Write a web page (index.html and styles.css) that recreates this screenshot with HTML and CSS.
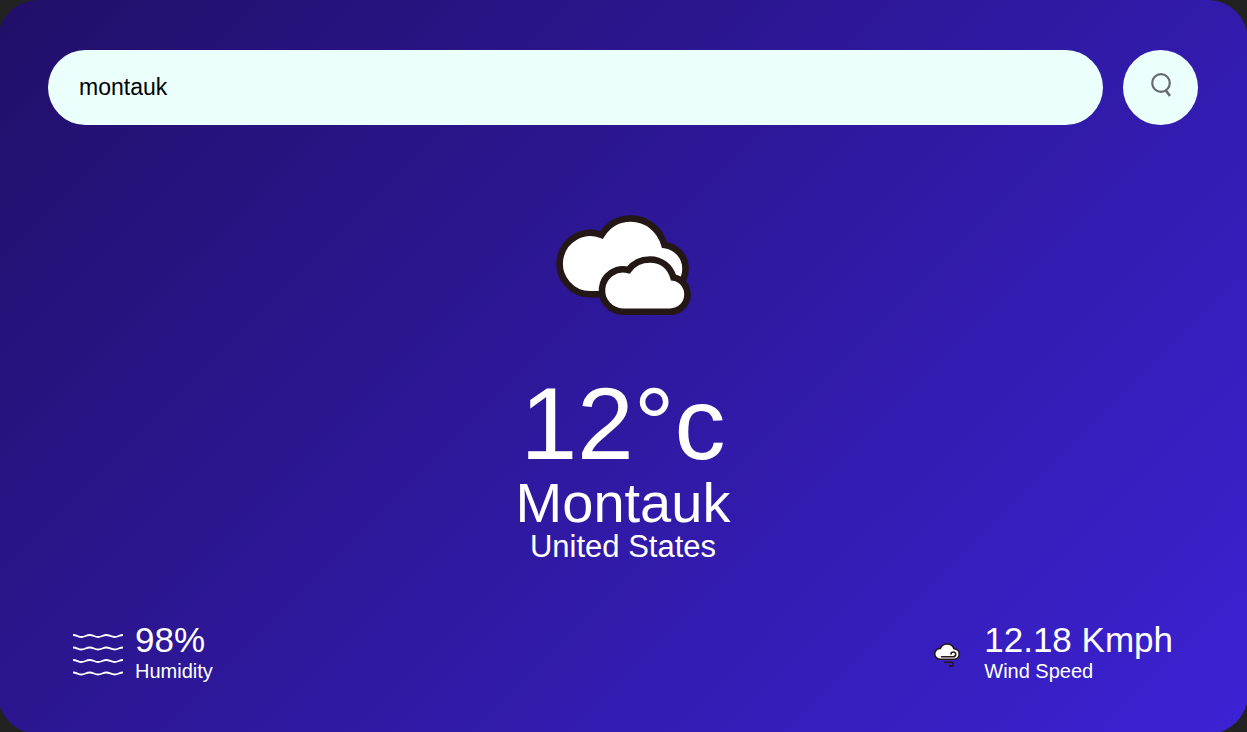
FILE: index.html
```html
<!DOCTYPE html>
<html lang="en">
<head>
<meta charset="utf-8">
<meta name="viewport" content="width=device-width, initial-scale=1">
<title>Weather</title>
<link rel="stylesheet" href="styles.css">
</head>
<body>
<main class="card">
  <form class="search">
    <input class="search-input" type="text" value="montauk" aria-label="City name" spellcheck="false" autocomplete="off">
    <button class="search-button" type="button" aria-label="Search">
      <svg class="search-icon" viewBox="0 0 24 28" fill="none" stroke="#686b6a" stroke-width="2.2">
        <circle cx="12" cy="12" r="8.8"/>
        <path d="M16.400 19L21 25" stroke-width="2.6"/>
      </svg>
    </button>
  </form>

  <section class="weather">
    <svg class="weather-icon" viewBox="0 0 136 102" fill="#fff" stroke="#231815" stroke-width="6.6" aria-hidden="true">
      <path d="M36 79.300A30.700 30.700 0 1 1 46.500 20C53.500 9 63.500 3.500 75.700 3.500C92 3.500 105 14.500 109.500 30C121.500 31.500 130.500 41.500 130.500 53.500C130.500 58.500 129.500 62.500 127 66.500L100 79.300Z"/>
      <path d="M68.700 96.700A21.200 21.200 0 1 1 73.500 55C78.500 48 86 44.500 95 44.500C106.500 44.500 115 51.500 118.500 62.500C126.500 63.500 132.500 71 132.500 79.500C132.500 89 125 96.700 115 96.700Z"/>
    </svg>
    <h1 class="temp">12°c</h1>
    <h2 class="city">Montauk</h2>
    <h3 class="country">United States</h3>
  </section>

  <section class="details">
    <div class="detail">
      <svg class="detail-icon" viewBox="0 0 50 50" fill="none" stroke="#fff" stroke-width="1.8" aria-hidden="true">
        <path d="M0 4C4 4 5 6 8.500 6S13 4 16.700 4S21.500 6 25 6S30 4 33.300 4S38 6 41.700 6S46 4 50 4"/>
        <path d="M0 16.500C4 16.500 5 18.500 8.500 18.500S13 16.500 16.700 16.500S21.500 18.500 25 18.500S30 16.500 33.300 16.500S38 18.500 41.700 18.500S46 16.500 50 16.500"/>
        <path d="M0 29C4 29 5 31 8.500 31S13 29 16.700 29S21.500 31 25 31S30 29 33.300 29S38 31 41.700 31S46 29 50 29"/>
        <path d="M0 41.500C4 41.500 5 43.500 8.500 43.500S13 41.500 16.700 41.500S21.500 43.500 25 43.500S30 41.500 33.300 41.500S38 43.500 41.700 43.500S46 41.500 50 41.500"/>
      </svg>
      <div>
        <p class="value">98%</p>
        <p class="label">Humidity</p>
      </div>
    </div>
    <div class="detail">
      <svg class="detail-icon" viewBox="0 0 50 50" fill="none" stroke="#231815" stroke-width="1.6" stroke-linecap="round" aria-hidden="true">
        <path fill="#fff" d="M18 28.300A5.400 5.400 0 1 1 18.300 17.400C19.500 14.500 22 13 25 13C28.500 13 31 14.800 32 17.800C35 18 37.200 20.200 37.200 23.100C37.200 26 35 28.300 32 28.300Z"/>
        <path d="M19.500 25.800H31C34.500 25.800 34.500 21 31.500 21C30 21 29 21.800 29 23"/>
        <path d="M22.500 31.300H29C32 31.300 31.800 35.500 29.300 35.300C28.500 35.300 27.800 35 27.500 34.500"/>
      </svg>
      <div>
        <p class="value">12.18 Kmph</p>
        <p class="label">Wind Speed</p>
      </div>
    </div>
  </section>
</main>
</body>
</html>
```
FILE: styles.css
```css
* {
  box-sizing: border-box;
  margin: 0;
  padding: 0;
}

body {
  overflow: hidden;
  background: #222;
  font-family: "Liberation Sans", Arial, sans-serif;
}

.card {
  display: flex;
  flex-direction: column;
  min-height: calc(100vh + 2px);
  margin: 0 -1px 0 -2px;
  padding: 50px 50px 53px;
  border-radius: 40px;
  background: linear-gradient(135deg, #220f68, #3b22d4);
  color: #fff;
}

.search {
  display: flex;
  gap: 20px;
}

.search-input {
  flex: 1;
  min-width: 0;
  height: 75px;
  padding: 0 31px;
  border: 0;
  border-radius: 40px;
  outline: 0;
  background: #ebfffc;
  color: #000;
  font: 23px "Liberation Sans", Arial, sans-serif;
}

.search-button {
  display: flex;
  justify-content: center;
  width: 75px;
  height: 75px;
  padding-top: 21px;
  border: 0;
  border-radius: 50%;
  background: #ebfffc;
  cursor: pointer;
}

.search-icon {
  width: 24px;
  height: 28px;
}

.weather {
  display: flex;
  flex-direction: column;
  align-items: center;
  padding-top: 90px;
}

.weather-icon {
  width: 136px;
  height: 102px;
  margin-bottom: 56px;
}

.temp,
.city,
.country {
  font-weight: 500;
  line-height: 1;
}

.temp {
  font-size: 102px;
}

.city {
  font-size: 56px;
}

.country {
  font-size: 31px;
}

.details {
  display: flex;
  justify-content: space-between;
  margin-top: auto;
  padding: 0 25px;
}

.detail {
  display: flex;
  align-items: flex-end;
  gap: 12px;
}

.detail-icon {
  width: 50px;
  height: 50px;
}

.value {
  font-size: 35px;
  line-height: 42px;
}

.label {
  font-size: 20px;
  line-height: 20px;
}
```
